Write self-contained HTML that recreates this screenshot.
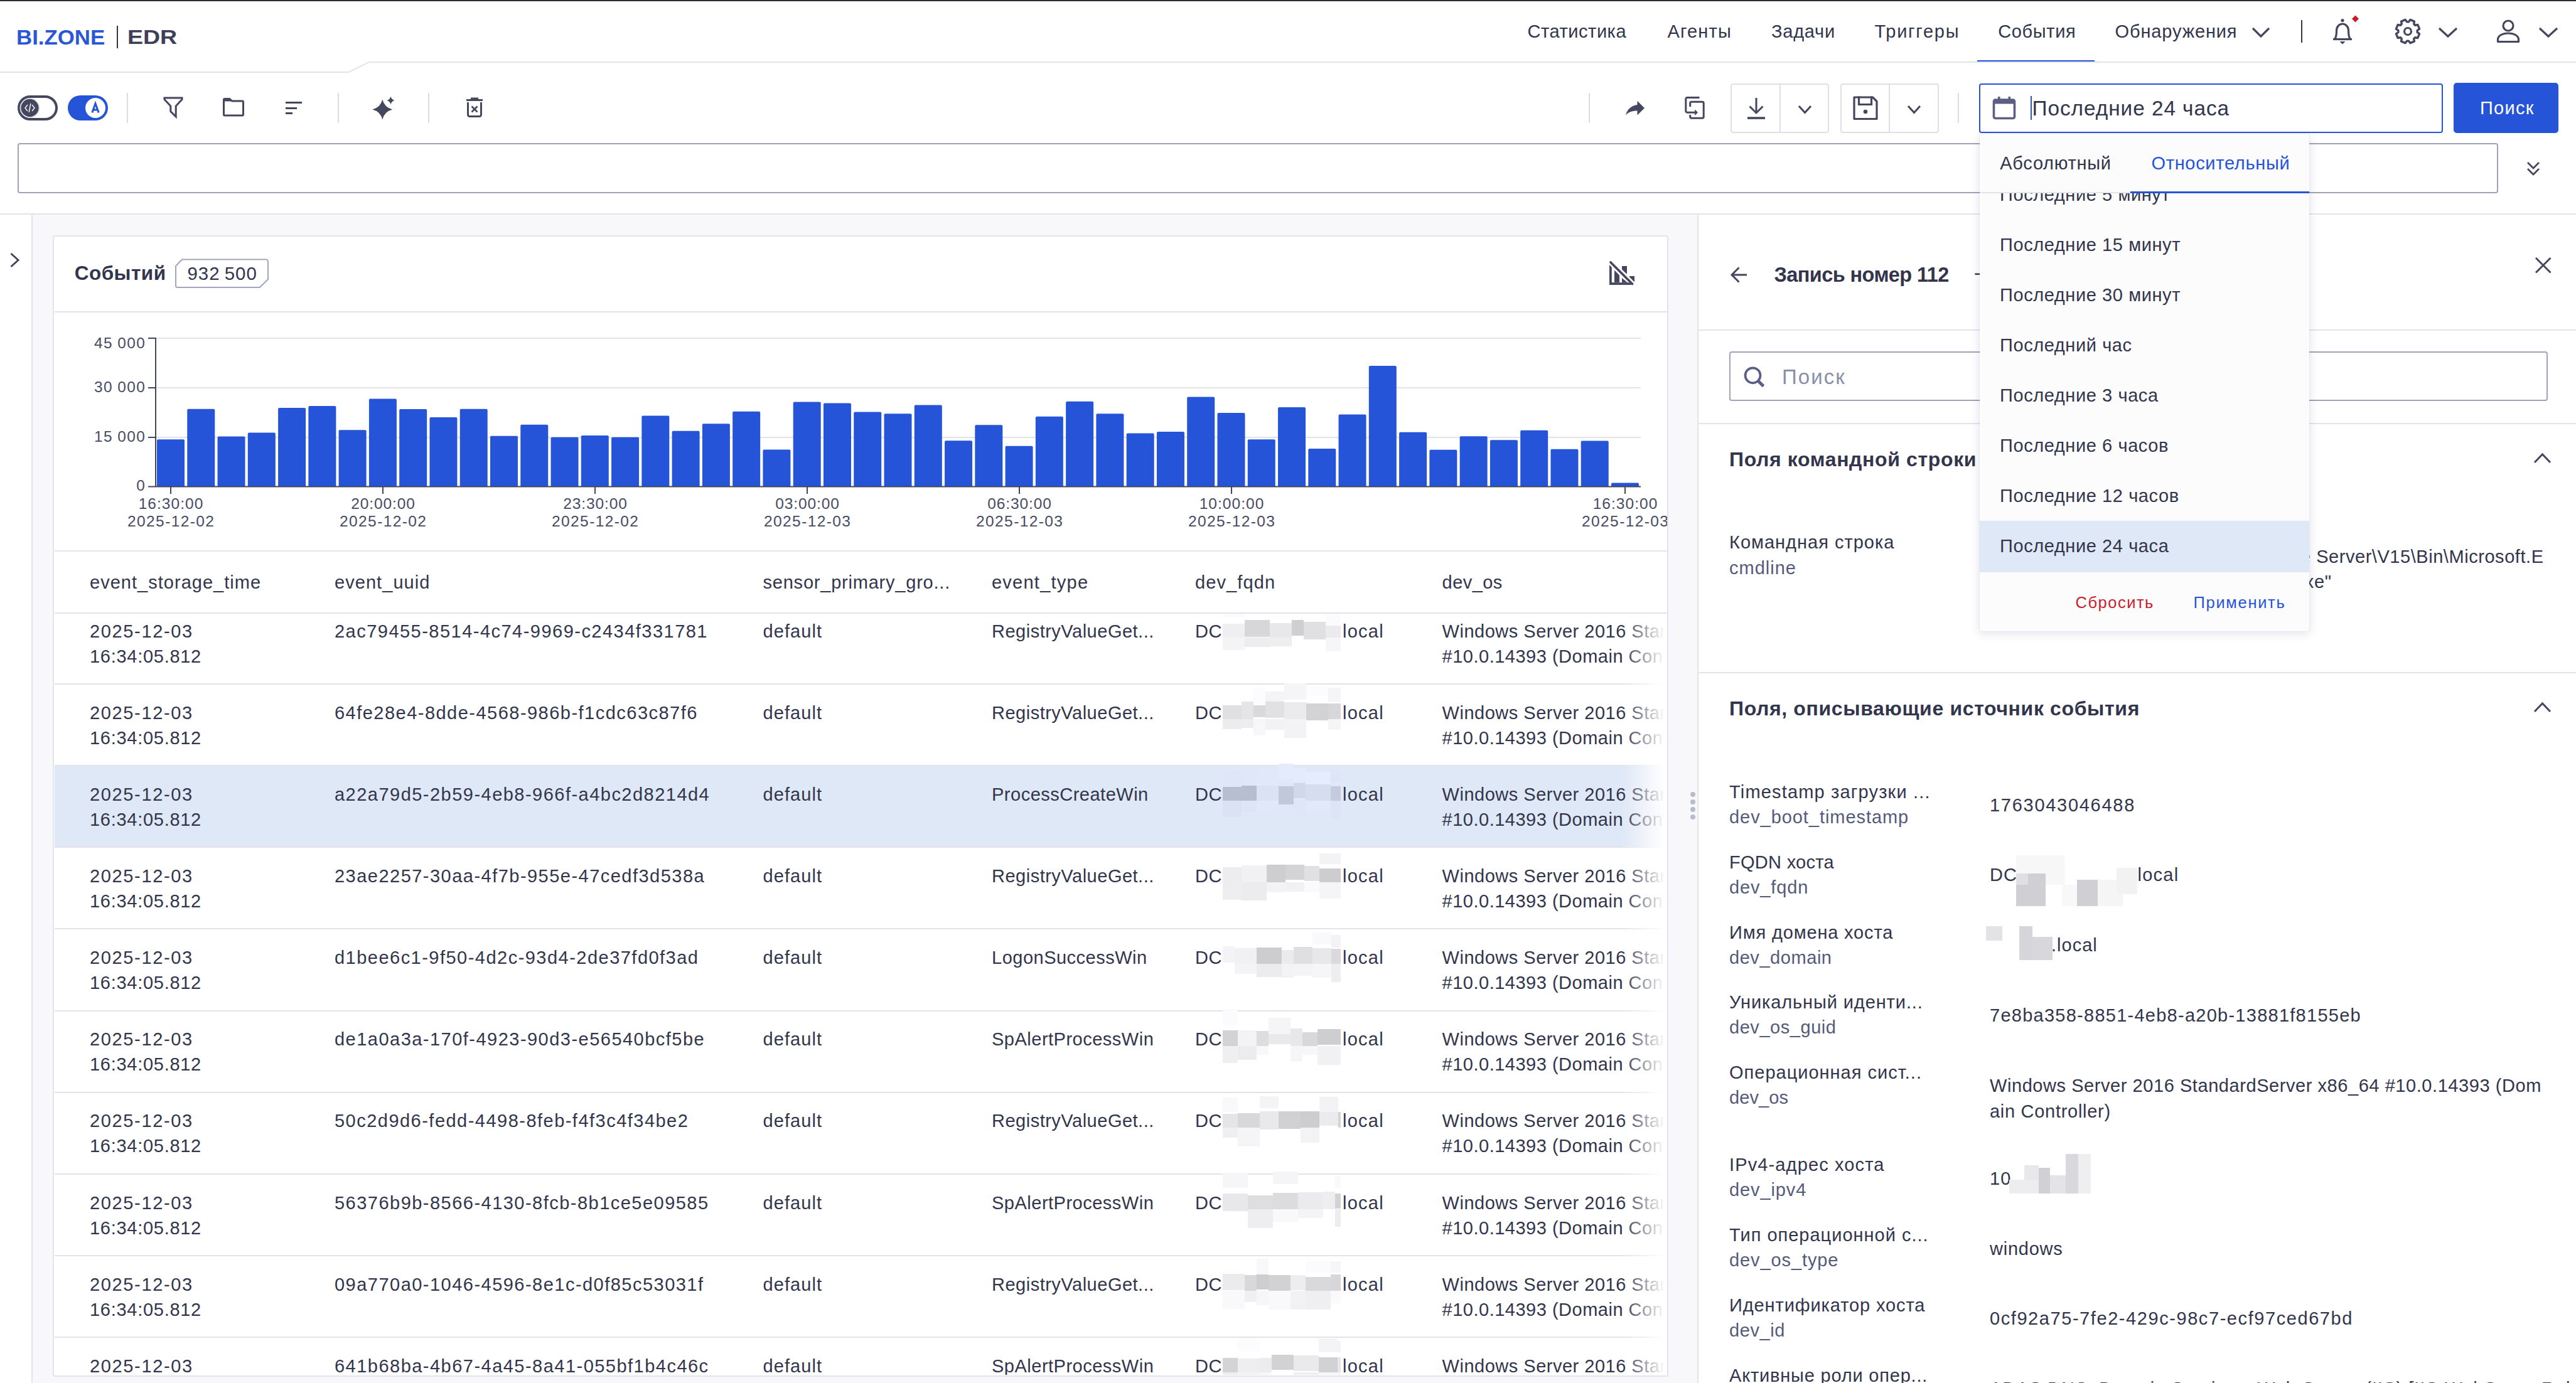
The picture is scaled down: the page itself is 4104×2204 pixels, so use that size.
<!DOCTYPE html>
<html><head><meta charset="utf-8"><title>BI.ZONE EDR</title>
<style>
html,body{margin:0;padding:0;}
body{width:4104px;height:2204px;position:relative;overflow:hidden;background:#fff;font-family:"Liberation Sans",sans-serif;color:#32354b;}
.a{position:absolute;white-space:nowrap;}
svg.a{overflow:visible}
</style></head><body>
<div class="a" style="left:0px;top:0px;width:4104px;height:2px;background:#2c2c38;"></div>
<div class="a" style="left:26.30px;top:37.01px;font-size:34px;line-height:44px;color:#2a56d8;font-weight:700;letter-spacing:0px;transform:scaleX(1.0237);transform-origin:0 0;">BI.ZONE</div>
<div class="a" style="left:186px;top:41px;width:2px;height:36px;background:#32354b;"></div>
<div class="a" style="left:202.50px;top:38.54px;font-size:31.6px;line-height:41px;color:#3d4058;font-weight:700;letter-spacing:0px;transform:scaleX(1.1875);transform-origin:0 0;">EDR</div>
<div class="a" style="left:2433.60px;top:31.45px;font-size:29px;line-height:38px;color:#32354b;letter-spacing:0.522px;">Статистика</div>
<div class="a" style="left:2656.60px;top:31.45px;font-size:29px;line-height:38px;color:#32354b;letter-spacing:1.12px;">Агенты</div>
<div class="a" style="left:2822.00px;top:31.45px;font-size:29px;line-height:38px;color:#32354b;letter-spacing:0.76px;">Задачи</div>
<div class="a" style="left:2986.50px;top:31.45px;font-size:29px;line-height:38px;color:#32354b;letter-spacing:1.714px;">Триггеры</div>
<div class="a" style="left:3183.30px;top:31.45px;font-size:29px;line-height:38px;color:#32354b;letter-spacing:0.617px;">События</div>
<div class="a" style="left:3369.60px;top:31.45px;font-size:29px;line-height:38px;color:#32354b;letter-spacing:0.86px;">Обнаружения</div>
<div class="a" style="left:3150px;top:96px;width:187px;height:3px;background:#2654d8;"></div>
<svg class="a" style="left:0px;top:90px;" width="4104" height="30" viewBox="0 90 4104 30"><polyline points="0,115 555.5,115 587.7,99 4104,99" fill="none" stroke="#e3e4ea" stroke-width="2"/></svg>
<svg class="a" style="left:3585px;top:41px;" width="34" height="21" viewBox="3585 41 34 21"><polyline points="3589,45 3602.0,58 3615,45" fill="none" stroke="#45475f" stroke-width="3.2"/></svg>
<div class="a" style="left:3666px;top:32px;width:2px;height:36px;background:#32354b;"></div>
<svg class="a" style="left:3710px;top:25px;" width="50" height="50" viewBox="3710 25 50 50"><circle cx="3732" cy="32.5" r="2.6" fill="#45475f"/>
<path d="M3720,62 C3722,59 3722.5,56 3722.5,48.5 A9.5,10.5 0 0 1 3741.5,48.5 C3741.5,56 3742,59 3744,62" fill="none" stroke="#45475f" stroke-width="3.2"/>
<path d="M3717,62.5 H3747" stroke="#45475f" stroke-width="3.2"/>
<path d="M3727.5,66 H3736.5 L3732,70.5 Z" fill="#45475f"/></svg>
<svg class="a" style="left:3745px;top:23px;" width="15" height="15" viewBox="3745 23 15 15"><path d="M3752.5,24.5 L3758,30 L3752.5,35.5 L3747,30 Z" fill="#c81e2b"/></svg>
<svg class="a" style="left:3810px;top:24px;" width="52" height="52" viewBox="3810 24 52 52"><path d="M3851.13,51.41 L3854.61,53.82 L3851.86,60.46 L3847.70,59.71 L3845.71,61.70 L3846.46,65.86 L3839.82,68.61 L3837.41,65.13 L3834.59,65.13 L3832.18,68.61 L3825.54,65.86 L3826.29,61.70 L3824.30,59.71 L3820.14,60.46 L3817.39,53.82 L3820.87,51.41 L3820.87,48.59 L3817.39,46.18 L3820.14,39.54 L3824.30,40.29 L3826.29,38.30 L3825.54,34.14 L3832.18,31.39 L3834.59,34.87 L3837.41,34.87 L3839.82,31.39 L3846.46,34.14 L3845.71,38.30 L3847.70,40.29 L3851.86,39.54 L3854.61,46.18 L3851.13,48.59 Z" fill="none" stroke="#45475f" stroke-width="3.4" stroke-linejoin="round"/><circle cx="3836" cy="50" r="5.5" fill="none" stroke="#45475f" stroke-width="3.2"/></svg>
<svg class="a" style="left:3882px;top:41px;" width="36" height="21" viewBox="3882 41 36 21"><polyline points="3886,45 3900.0,58 3914,45" fill="none" stroke="#45475f" stroke-width="3.2"/></svg>
<svg class="a" style="left:3972px;top:26px;" width="48" height="48" viewBox="3972 26 48 48"><circle cx="3996" cy="41" r="8" fill="none" stroke="#45475f" stroke-width="3.2"/><path d="M3979.5,66.5 V63 c0,-6 7,-10 16.5,-10 c9.5,0 16.5,4 16.5,10 V66.5 Z" fill="none" stroke="#45475f" stroke-width="3.2" stroke-linejoin="round"/></svg>
<svg class="a" style="left:4042px;top:41px;" width="36" height="21" viewBox="4042 41 36 21"><polyline points="4046,45 4060.0,58 4074,45" fill="none" stroke="#45475f" stroke-width="3.2"/></svg>
<div class="a" style="left:28px;top:152px;width:64px;height:40px;box-sizing:border-box;border:4px solid #45475f;border-radius:20px;background:#fff"></div>
<svg class="a" style="left:28px;top:152px;" width="64" height="40" viewBox="28 152 64 40"><circle cx="47.5" cy="172" r="15.5" fill="#fff" stroke="#d5d6de" stroke-width="1"/><circle cx="47.5" cy="172" r="14.2" fill="#45475f"/><polyline points="44,167 40,172 44,177" fill="none" stroke="#fff" stroke-width="1.4"/><polyline points="51,167 55,172 51,177" fill="none" stroke="#fff" stroke-width="1.4"/><line x1="48.8" y1="165" x2="46.2" y2="179" stroke="#fff" stroke-width="1.4"/></svg>
<div class="a" style="left:108px;top:152px;width:64px;height:40px;border-radius:20px;background:#2654d8"></div>
<svg class="a" style="left:108px;top:152px;" width="64" height="40" viewBox="108 152 64 40"><circle cx="152" cy="172" r="16" fill="#fff"/><path d="M146.8,179.5 L152,165 L157.2,179.5 M148.6,175 H155.4" fill="none" stroke="#2654d8" stroke-width="3"/></svg>
<div class="a" style="left:202px;top:148px;width:2px;height:48px;background:#dcdde4;"></div>
<div class="a" style="left:538px;top:148px;width:2px;height:48px;background:#dcdde4;"></div>
<div class="a" style="left:682px;top:148px;width:2px;height:48px;background:#dcdde4;"></div>
<div class="a" style="left:2531px;top:148px;width:2px;height:48px;background:#dcdde4;"></div>
<div class="a" style="left:3119px;top:148px;width:2px;height:48px;background:#dcdde4;"></div>
<svg class="a" style="left:255px;top:150px;" width="42" height="44" viewBox="255 150 42 44"><path d="M262,156 H290 V158.5 L280.2,169 V186 L271.8,177.6 V169 L262,158.5 Z" fill="none" stroke="#45475f" stroke-width="3" stroke-linejoin="miter"/></svg>
<svg class="a" style="left:350px;top:150px;" width="44" height="40" viewBox="350 150 44 40"><path d="M356.5,161 V159 a1.5,1.5 0 0 1 1.5,-1.5 H366 L369.5,161 H386 a1.5,1.5 0 0 1 1.5,1.5 V182.5 a1.5,1.5 0 0 1 -1.5,1.5 H358 a1.5,1.5 0 0 1 -1.5,-1.5 Z" fill="none" stroke="#45475f" stroke-width="3" stroke-linejoin="round"/><path d="M356.5,157 H366.5 L370,161.5 H356.5 Z" fill="#45475f"/></svg>
<div class="a" style="left:455px;top:162px;width:26px;height:3px;background:#45475f;"></div>
<div class="a" style="left:455px;top:170.5px;width:18px;height:3px;background:#45475f;"></div>
<div class="a" style="left:455px;top:179px;width:10.5px;height:3px;background:#45475f;"></div>
<svg class="a" style="left:585px;top:150px;" width="50" height="46" viewBox="585 150 50 46"><path d="M609.3,158.5 Q612.5,171.3 625.3,174.5 Q612.5,177.7 609.3,190.5 Q606.0999999999999,177.7 593.3,174.5 Q606.0999999999999,171.3 609.3,158.5 Z" fill="#45475f"/><path d="M622.5,153.7 Q623.76,158.74 628.8,160 Q623.76,161.26 622.5,166.3 Q621.24,161.26 616.2,160 Q621.24,158.74 622.5,153.7 Z" fill="#45475f"/></svg>
<svg class="a" style="left:738px;top:152px;" width="36" height="40" viewBox="738 152 36 40"><path d="M743,159.5 H769" stroke="#45475f" stroke-width="3"/><path d="M751,158 V156.5 H761 V158" fill="#45475f" stroke="#45475f" stroke-width="2"/><path d="M745.5,163 V183 a2.5,2.5 0 0 0 2.5,2.5 H764 a2.5,2.5 0 0 0 2.5,-2.5 V163" fill="none" stroke="#45475f" stroke-width="3"/><path d="M751.5,169.5 L760.5,178.5 M760.5,169.5 L751.5,178.5" stroke="#45475f" stroke-width="2.8"/></svg>
<svg class="a" style="left:2585px;top:155px;" width="40" height="35" viewBox="2585 155 40 35"><path d="M2608.5,160.7 L2620,172.2 L2608.5,183.5 V176.5 C2600,176.5 2594,178.5 2590,184 C2592,175 2598,168.5 2608.5,167 Z" fill="#45475f"/></svg>
<svg class="a" style="left:2680px;top:150px;" width="40" height="44" viewBox="2680 150 40 44"><path d="M2707.5,155.5 H2688 a2.2,2.2 0 0 0 -2.2,2.2 V177 a2.2,2.2 0 0 0 2.2,2.2 H2704" fill="none" stroke="#45475f" stroke-width="3"/><path d="M2692.7,170 V164.5 a2.2,2.2 0 0 1 2.2,-2.2 H2712 a2.2,2.2 0 0 1 2.2,2.2 V186 a2.2,2.2 0 0 1 -2.2,2.2 H2694.9 a2.2,2.2 0 0 1 -2.2,-2.2 V183" fill="none" stroke="#45475f" stroke-width="3"/><path d="M2700,174.5 L2705,179.2 L2700,184 Z" fill="#45475f"/></svg>
<div class="a" style="left:2757px;top:132.5px;width:157px;height:79px;box-sizing:border-box;border:2px solid #dfe0e7;border-radius:4px"></div>
<div class="a" style="left:2835px;top:133px;width:2px;height:78px;background:#dfe0e7;"></div>
<div class="a" style="left:2931.5px;top:132.5px;width:157px;height:79px;box-sizing:border-box;border:2px solid #dfe0e7;border-radius:4px"></div>
<div class="a" style="left:3009px;top:133px;width:2px;height:78px;background:#dfe0e7;"></div>
<svg class="a" style="left:2780px;top:150px;" width="36" height="44" viewBox="2780 150 36 44"><path d="M2798,156 V179.5" stroke="#45475f" stroke-width="3"/><polyline points="2787.5,169.5 2798,180 2808.5,169.5" fill="none" stroke="#45475f" stroke-width="3"/><rect x="2784" y="186.3" width="28" height="3.6" fill="#45475f"/></svg>
<svg class="a" style="left:2861.5px;top:165px;" width="27.0" height="18.5" viewBox="2861.5 165 27.0 18.5"><polyline points="2865.5,169 2875.0,179.5 2884.5,169" fill="none" stroke="#45475f" stroke-width="3"/></svg>
<svg class="a" style="left:2948px;top:148px;" width="48" height="48" viewBox="2948 148 48 48"><path d="M2954,155 H2983.5 L2990,161.5 V189.5 H2954 Z" fill="none" stroke="#45475f" stroke-width="3.2" stroke-linejoin="round"/><path d="M2961.5,153.5 V166.5 H2981.5 V153.5" fill="none" stroke="#45475f" stroke-width="3.2"/><circle cx="2972" cy="178" r="3.3" fill="#45475f"/></svg>
<svg class="a" style="left:3035.5px;top:165px;" width="27.0" height="18.5" viewBox="3035.5 165 27.0 18.5"><polyline points="3039.5,169 3049.0,179.5 3058.5,169" fill="none" stroke="#45475f" stroke-width="3"/></svg>
<div class="a" style="left:3153px;top:132.5px;width:739px;height:79px;box-sizing:border-box;border:2.5px solid #2654d8;border-radius:4px;background:#fff"></div>
<svg class="a" style="left:3170px;top:150px;" width="46" height="44" viewBox="3170 150 46 44"><rect x="3176.5" y="159" width="33" height="29.5" rx="2.5" fill="none" stroke="#5c5f82" stroke-width="3.6"/><rect x="3176.5" y="159" width="33" height="6.5" fill="#5c5f82"/><rect x="3183" y="154" width="3.6" height="6" fill="#5c5f82"/><rect x="3199.5" y="154" width="3.6" height="6" fill="#5c5f82"/></svg>
<div class="a" style="left:3235px;top:153px;width:2px;height:38px;background:#2654d8;"></div>
<div class="a" style="left:3237.50px;top:150.92px;font-size:33.4px;line-height:43px;color:#32354b;letter-spacing:0.938px;">Последние 24 часа</div>
<div class="a" style="left:3909px;top:132px;width:167px;height:80px;border-radius:5px;background:#2654d8"></div>
<div class="a" style="left:3951.00px;top:152.95px;font-size:29px;line-height:38px;color:#ffffff;letter-spacing:1.25px;">Поиск</div>
<div class="a" style="left:28px;top:228px;width:3952px;height:80px;box-sizing:border-box;border:2px solid #9fa2b9;border-radius:4px;background:#fff"></div>
<svg class="a" style="left:4020px;top:252px;" width="32" height="32" viewBox="4020 252 32 32"><polyline points="4027,259 4036,268 4045,259" fill="none" stroke="#45475f" stroke-width="2.8"/><polyline points="4027,269 4036,278 4045,269" fill="none" stroke="#45475f" stroke-width="2.8"/></svg>
<div class="a" style="left:0px;top:340px;width:4104px;height:2px;background:#e3e4ea;"></div>
<div class="a" style="left:52px;top:342px;width:2653px;height:1862px;background:#f8f8fa;"></div>
<div class="a" style="left:50px;top:342px;width:2px;height:1862px;background:#e3e4ea;"></div>
<svg class="a" style="left:12px;top:398px;" width="24" height="32" viewBox="12 398 24 32"><polyline points="17.5,404 29,414.5 17.5,425" fill="none" stroke="#45475f" stroke-width="3"/></svg>
<div class="a" style="left:84px;top:375px;width:2574px;height:1819px;box-sizing:border-box;border:2px solid #e3e4ea;border-radius:4px;background:#fff"></div>
<div class="a" style="left:118.80px;top:415.38px;font-size:31.5px;line-height:41px;color:#32354b;font-weight:700;letter-spacing:0.45px;">Событий</div>
<svg class="a" style="left:276px;top:410px;" width="156" height="52" viewBox="276 410 156 52"><path d="M290,413.5 H424 a3,3 0 0 1 3,3 V445 L414,458 H283 a3,3 0 0 1 -3,-3 V424 Z" fill="none" stroke="#a2a5bd" stroke-width="2"/></svg>
<div class="a" style="left:298.50px;top:417.41px;font-size:29.4px;line-height:38px;color:#32354b;letter-spacing:1.0px;word-spacing:-2px;">932 500</div>
<svg class="a" style="left:2560px;top:412px;" width="48" height="46" viewBox="2560 412 48 46"><polygon points="2564,422 2567.8,426 2567.8,450.2 2596,450.2 2599.5,454 2564,454" fill="#45475f"/>
<polygon points="2572,430.5 2580,438.5 2580,450.2 2572,450.2" fill="#45475f"/>
<polygon points="2584,443 2593,450.2 2584,450.2" fill="#45475f"/>
<polygon points="2584,424 2592,424 2592,437 2584,429.5" fill="#45475f"/>
<polygon points="2596,440 2604,440 2604,449.5 2596,441.5" fill="#45475f"/>
<line x1="2566" y1="418" x2="2600.5" y2="452.5" stroke="#45475f" stroke-width="3.8" stroke-linecap="round"/></svg>
<div class="a" style="left:87px;top:496px;width:2569px;height:2px;background:#e3e4ea;"></div>
<svg class="a" style="left:87px;top:498px;" width="2568" height="380" viewBox="87 498 2568 380"><line x1="248" y1="539" x2="2614" y2="539" stroke="#e2e3e9" stroke-width="2"/><line x1="248" y1="618" x2="2614" y2="618" stroke="#e2e3e9" stroke-width="2"/><line x1="248" y1="697" x2="2614" y2="697" stroke="#e2e3e9" stroke-width="2"/><path d="M250.00,775 V702.30 a2,2 0 0 1 2,-2 H292.00 a2,2 0 0 1 2,2 V775 Z" fill="#2654d8"/><path d="M298.27,775 V653.70 a2,2 0 0 1 2,-2 H340.27 a2,2 0 0 1 2,2 V775 Z" fill="#2654d8"/><path d="M346.54,775 V697.50 a2,2 0 0 1 2,-2 H388.54 a2,2 0 0 1 2,2 V775 Z" fill="#2654d8"/><path d="M394.81,775 V691.60 a2,2 0 0 1 2,-2 H436.81 a2,2 0 0 1 2,2 V775 Z" fill="#2654d8"/><path d="M443.08,775 V652.10 a2,2 0 0 1 2,-2 H485.08 a2,2 0 0 1 2,2 V775 Z" fill="#2654d8"/><path d="M491.35,775 V649.00 a2,2 0 0 1 2,-2 H533.35 a2,2 0 0 1 2,2 V775 Z" fill="#2654d8"/><path d="M539.62,775 V687.20 a2,2 0 0 1 2,-2 H581.62 a2,2 0 0 1 2,2 V775 Z" fill="#2654d8"/><path d="M587.90,775 V637.40 a2,2 0 0 1 2,-2 H629.90 a2,2 0 0 1 2,2 V775 Z" fill="#2654d8"/><path d="M636.17,775 V654.10 a2,2 0 0 1 2,-2 H678.17 a2,2 0 0 1 2,2 V775 Z" fill="#2654d8"/><path d="M684.44,775 V666.90 a2,2 0 0 1 2,-2 H726.44 a2,2 0 0 1 2,2 V775 Z" fill="#2654d8"/><path d="M732.71,775 V653.70 a2,2 0 0 1 2,-2 H774.71 a2,2 0 0 1 2,2 V775 Z" fill="#2654d8"/><path d="M780.98,775 V696.70 a2,2 0 0 1 2,-2 H822.98 a2,2 0 0 1 2,2 V775 Z" fill="#2654d8"/><path d="M829.25,775 V678.80 a2,2 0 0 1 2,-2 H871.25 a2,2 0 0 1 2,2 V775 Z" fill="#2654d8"/><path d="M877.52,775 V698.70 a2,2 0 0 1 2,-2 H919.52 a2,2 0 0 1 2,2 V775 Z" fill="#2654d8"/><path d="M925.79,775 V695.90 a2,2 0 0 1 2,-2 H967.79 a2,2 0 0 1 2,2 V775 Z" fill="#2654d8"/><path d="M974.06,775 V698.70 a2,2 0 0 1 2,-2 H1016.06 a2,2 0 0 1 2,2 V775 Z" fill="#2654d8"/><path d="M1022.33,775 V664.50 a2,2 0 0 1 2,-2 H1064.33 a2,2 0 0 1 2,2 V775 Z" fill="#2654d8"/><path d="M1070.60,775 V688.80 a2,2 0 0 1 2,-2 H1112.60 a2,2 0 0 1 2,2 V775 Z" fill="#2654d8"/><path d="M1118.88,775 V677.20 a2,2 0 0 1 2,-2 H1160.88 a2,2 0 0 1 2,2 V775 Z" fill="#2654d8"/><path d="M1167.15,775 V657.70 a2,2 0 0 1 2,-2 H1209.15 a2,2 0 0 1 2,2 V775 Z" fill="#2654d8"/><path d="M1215.42,775 V718.60 a2,2 0 0 1 2,-2 H1257.42 a2,2 0 0 1 2,2 V775 Z" fill="#2654d8"/><path d="M1263.69,775 V642.60 a2,2 0 0 1 2,-2 H1305.69 a2,2 0 0 1 2,2 V775 Z" fill="#2654d8"/><path d="M1311.96,775 V644.60 a2,2 0 0 1 2,-2 H1353.96 a2,2 0 0 1 2,2 V775 Z" fill="#2654d8"/><path d="M1360.23,775 V658.50 a2,2 0 0 1 2,-2 H1402.23 a2,2 0 0 1 2,2 V775 Z" fill="#2654d8"/><path d="M1408.50,775 V661.30 a2,2 0 0 1 2,-2 H1450.50 a2,2 0 0 1 2,2 V775 Z" fill="#2654d8"/><path d="M1456.77,775 V647.40 a2,2 0 0 1 2,-2 H1498.77 a2,2 0 0 1 2,2 V775 Z" fill="#2654d8"/><path d="M1505.04,775 V704.30 a2,2 0 0 1 2,-2 H1547.04 a2,2 0 0 1 2,2 V775 Z" fill="#2654d8"/><path d="M1553.31,775 V679.20 a2,2 0 0 1 2,-2 H1595.31 a2,2 0 0 1 2,2 V775 Z" fill="#2654d8"/><path d="M1601.58,775 V712.70 a2,2 0 0 1 2,-2 H1643.58 a2,2 0 0 1 2,2 V775 Z" fill="#2654d8"/><path d="M1649.85,775 V665.70 a2,2 0 0 1 2,-2 H1691.85 a2,2 0 0 1 2,2 V775 Z" fill="#2654d8"/><path d="M1698.12,775 V641.80 a2,2 0 0 1 2,-2 H1740.12 a2,2 0 0 1 2,2 V775 Z" fill="#2654d8"/><path d="M1746.40,775 V661.30 a2,2 0 0 1 2,-2 H1788.40 a2,2 0 0 1 2,2 V775 Z" fill="#2654d8"/><path d="M1794.67,775 V692.40 a2,2 0 0 1 2,-2 H1836.67 a2,2 0 0 1 2,2 V775 Z" fill="#2654d8"/><path d="M1842.94,775 V690.00 a2,2 0 0 1 2,-2 H1884.94 a2,2 0 0 1 2,2 V775 Z" fill="#2654d8"/><path d="M1891.21,775 V634.60 a2,2 0 0 1 2,-2 H1933.21 a2,2 0 0 1 2,2 V775 Z" fill="#2654d8"/><path d="M1939.48,775 V660.10 a2,2 0 0 1 2,-2 H1981.48 a2,2 0 0 1 2,2 V775 Z" fill="#2654d8"/><path d="M1987.75,775 V702.30 a2,2 0 0 1 2,-2 H2029.75 a2,2 0 0 1 2,2 V775 Z" fill="#2654d8"/><path d="M2036.02,775 V651.10 a2,2 0 0 1 2,-2 H2078.02 a2,2 0 0 1 2,2 V775 Z" fill="#2654d8"/><path d="M2084.29,775 V716.90 a2,2 0 0 1 2,-2 H2126.29 a2,2 0 0 1 2,2 V775 Z" fill="#2654d8"/><path d="M2132.56,775 V662.60 a2,2 0 0 1 2,-2 H2174.56 a2,2 0 0 1 2,2 V775 Z" fill="#2654d8"/><path d="M2180.83,775 V584.90 a2,2 0 0 1 2,-2 H2222.83 a2,2 0 0 1 2,2 V775 Z" fill="#2654d8"/><path d="M2229.10,775 V690.80 a2,2 0 0 1 2,-2 H2271.10 a2,2 0 0 1 2,2 V775 Z" fill="#2654d8"/><path d="M2277.38,775 V718.80 a2,2 0 0 1 2,-2 H2319.38 a2,2 0 0 1 2,2 V775 Z" fill="#2654d8"/><path d="M2325.65,775 V697.30 a2,2 0 0 1 2,-2 H2367.65 a2,2 0 0 1 2,2 V775 Z" fill="#2654d8"/><path d="M2373.92,775 V703.20 a2,2 0 0 1 2,-2 H2415.92 a2,2 0 0 1 2,2 V775 Z" fill="#2654d8"/><path d="M2422.19,775 V687.70 a2,2 0 0 1 2,-2 H2464.19 a2,2 0 0 1 2,2 V775 Z" fill="#2654d8"/><path d="M2470.46,775 V717.80 a2,2 0 0 1 2,-2 H2512.46 a2,2 0 0 1 2,2 V775 Z" fill="#2654d8"/><path d="M2518.73,775 V704.50 a2,2 0 0 1 2,-2 H2560.73 a2,2 0 0 1 2,2 V775 Z" fill="#2654d8"/><path d="M2567.00,775 V771.60 a2,2 0 0 1 2,-2 H2609.00 a2,2 0 0 1 2,2 V775 Z" fill="#2654d8"/><line x1="236" y1="775.5" x2="2614" y2="775.5" stroke="#43465e" stroke-width="2"/><line x1="248" y1="538" x2="248" y2="776" stroke="#43465e" stroke-width="2"/><line x1="236" y1="539" x2="248" y2="539" stroke="#43465e" stroke-width="2"/><line x1="236" y1="618" x2="248" y2="618" stroke="#43465e" stroke-width="2"/><line x1="236" y1="697" x2="248" y2="697" stroke="#43465e" stroke-width="2"/><line x1="272" y1="775" x2="272" y2="787" stroke="#43465e" stroke-width="2"/><line x1="610" y1="775" x2="610" y2="787" stroke="#43465e" stroke-width="2"/><line x1="948" y1="775" x2="948" y2="787" stroke="#43465e" stroke-width="2"/><line x1="1286" y1="775" x2="1286" y2="787" stroke="#43465e" stroke-width="2"/><line x1="1624" y1="775" x2="1624" y2="787" stroke="#43465e" stroke-width="2"/><line x1="1962" y1="775" x2="1962" y2="787" stroke="#43465e" stroke-width="2"/><line x1="2589" y1="775" x2="2589" y2="787" stroke="#43465e" stroke-width="2"/></svg>
<div class="a" style="right:3871.90px;top:531.34px;font-size:24.4px;line-height:32px;color:#484b63;letter-spacing:1.4px;word-spacing:-1px;">45 000</div>
<div class="a" style="right:3871.90px;top:601.04px;font-size:24.4px;line-height:32px;color:#484b63;letter-spacing:1.4px;word-spacing:-1px;">30 000</div>
<div class="a" style="right:3871.90px;top:679.74px;font-size:24.4px;line-height:32px;color:#484b63;letter-spacing:1.4px;word-spacing:-1px;">15 000</div>
<div class="a" style="right:3871.90px;top:758.04px;font-size:24.4px;line-height:32px;color:#484b63;letter-spacing:1.4px;word-spacing:-1px;">0</div>
<div class="a" style="left:87px;top:780px;width:2569px;height:90px;overflow:hidden">
<div class="a" style="left:85px;top:9.0px;width:200px;text-align:center;font-size:24.5px;line-height:28px;color:#484b63"><span style="letter-spacing:1.029px;margin-right:-1.029px">16:30:00</span><br><span style="letter-spacing:1.4px;margin-right:-1.4px">2025-12-02</span></div>
<div class="a" style="left:423px;top:9.0px;width:200px;text-align:center;font-size:24.5px;line-height:28px;color:#484b63"><span style="letter-spacing:0.886px;margin-right:-0.886px">20:00:00</span><br><span style="letter-spacing:1.4px;margin-right:-1.4px">2025-12-02</span></div>
<div class="a" style="left:761px;top:9.0px;width:200px;text-align:center;font-size:24.5px;line-height:28px;color:#484b63"><span style="letter-spacing:0.886px;margin-right:-0.886px">23:30:00</span><br><span style="letter-spacing:1.4px;margin-right:-1.4px">2025-12-02</span></div>
<div class="a" style="left:1099px;top:9.0px;width:200px;text-align:center;font-size:24.5px;line-height:28px;color:#484b63"><span style="letter-spacing:0.886px;margin-right:-0.886px">03:00:00</span><br><span style="letter-spacing:1.4px;margin-right:-1.4px">2025-12-03</span></div>
<div class="a" style="left:1437px;top:9.0px;width:200px;text-align:center;font-size:24.5px;line-height:28px;color:#484b63"><span style="letter-spacing:0.886px;margin-right:-0.886px">06:30:00</span><br><span style="letter-spacing:1.4px;margin-right:-1.4px">2025-12-03</span></div>
<div class="a" style="left:1775px;top:9.0px;width:200px;text-align:center;font-size:24.5px;line-height:28px;color:#484b63"><span style="letter-spacing:1.029px;margin-right:-1.029px">10:00:00</span><br><span style="letter-spacing:1.4px;margin-right:-1.4px">2025-12-03</span></div>
<div class="a" style="left:2402px;top:9.0px;width:200px;text-align:center;font-size:24.5px;line-height:28px;color:#484b63"><span style="letter-spacing:1.029px;margin-right:-1.029px">16:30:00</span><br><span style="letter-spacing:1.4px;margin-right:-1.4px">2025-12-03</span></div>
</div>
<div class="a" style="left:87px;top:877px;width:2569px;height:2px;background:#e3e4ea;"></div>
<div class="a" style="left:143.00px;top:908.95px;font-size:29px;line-height:38px;color:#32354b;letter-spacing:1.024px;">event_storage_time</div>
<div class="a" style="left:533.00px;top:908.95px;font-size:29px;line-height:38px;color:#32354b;letter-spacing:1.056px;">event_uuid</div>
<div class="a" style="left:1215.50px;top:908.95px;font-size:29px;line-height:38px;color:#32354b;letter-spacing:0.785px;">sensor_primary_gro...</div>
<div class="a" style="left:1580.00px;top:908.95px;font-size:29px;line-height:38px;color:#32354b;letter-spacing:1.244px;">event_type</div>
<div class="a" style="left:1904.00px;top:908.95px;font-size:29px;line-height:38px;color:#32354b;letter-spacing:1.1px;">dev_fqdn</div>
<div class="a" style="left:2297.60px;top:908.95px;font-size:29px;line-height:38px;color:#32354b;letter-spacing:0.44px;">dev_os</div>
<div class="a" style="left:87px;top:976px;width:2569px;height:2px;background:#e3e4ea;"></div>
<div class="a" style="left:87px;top:978px;width:2569px;height:1213px;overflow:hidden">
<div class="a" style="left:56.00px;top:8.85px;font-size:29px;line-height:38px;color:#32354b;letter-spacing:1.644px;">2025-12-03</div>
<div class="a" style="left:56.00px;top:48.85px;font-size:29px;line-height:38px;color:#32354b;letter-spacing:0.718px;">16:34:05.812</div>
<div class="a" style="left:446.00px;top:8.85px;font-size:29px;line-height:38px;color:#32354b;letter-spacing:1.477px;">2ac79455-8514-4c74-9969-c2434f331781</div>
<div class="a" style="left:1128.50px;top:8.85px;font-size:29px;line-height:38px;color:#32354b;letter-spacing:1.067px;">default</div>
<div class="a" style="left:1493.00px;top:8.85px;font-size:29px;line-height:38px;color:#32354b;letter-spacing:0.5px;">RegistryValueGet...</div>
<div class="a" style="left:1817.00px;top:8.85px;font-size:29px;line-height:38px;color:#32354b;letter-spacing:0.6px;">DC-</div>
<div class="a" style="left:2052.00px;top:8.85px;font-size:29px;line-height:38px;color:#32354b;letter-spacing:1.25px;">local</div>
<div class="a" style="left:2210.60px;top:8.85px;font-size:29px;line-height:38px;color:#32354b;letter-spacing:0.5px;">Windows Server 2016 StandardServer x86_64</div>
<div class="a" style="left:2210.60px;top:48.85px;font-size:29px;line-height:38px;color:#32354b;letter-spacing:0.5px;">#10.0.14393 (Domain Controller)</div>
<div class="a" style="left:0;top:111.1px;width:2569px;height:2px;background:#e3e4ea"></div>
<div class="a" style="left:56.00px;top:138.95px;font-size:29px;line-height:38px;color:#32354b;letter-spacing:1.644px;">2025-12-03</div>
<div class="a" style="left:56.00px;top:178.95px;font-size:29px;line-height:38px;color:#32354b;letter-spacing:0.718px;">16:34:05.812</div>
<div class="a" style="left:446.00px;top:138.95px;font-size:29px;line-height:38px;color:#32354b;letter-spacing:1.477px;">64fe28e4-8dde-4568-986b-f1cdc63c87f6</div>
<div class="a" style="left:1128.50px;top:138.95px;font-size:29px;line-height:38px;color:#32354b;letter-spacing:1.067px;">default</div>
<div class="a" style="left:1493.00px;top:138.95px;font-size:29px;line-height:38px;color:#32354b;letter-spacing:0.5px;">RegistryValueGet...</div>
<div class="a" style="left:1817.00px;top:138.95px;font-size:29px;line-height:38px;color:#32354b;letter-spacing:0.6px;">DC-</div>
<div class="a" style="left:2052.00px;top:138.95px;font-size:29px;line-height:38px;color:#32354b;letter-spacing:1.25px;">local</div>
<div class="a" style="left:2210.60px;top:138.95px;font-size:29px;line-height:38px;color:#32354b;letter-spacing:0.5px;">Windows Server 2016 StandardServer x86_64</div>
<div class="a" style="left:2210.60px;top:178.95px;font-size:29px;line-height:38px;color:#32354b;letter-spacing:0.5px;">#10.0.14393 (Domain Controller)</div>
<div class="a" style="left:0;top:242.1px;width:2569px;height:130.5px;background:#dfe8f6"></div>
<div class="a" style="left:0;top:241.2px;width:2569px;height:2px;background:#e3e4ea"></div>
<div class="a" style="left:56.00px;top:269.05px;font-size:29px;line-height:38px;color:#32354b;letter-spacing:1.644px;">2025-12-03</div>
<div class="a" style="left:56.00px;top:309.05px;font-size:29px;line-height:38px;color:#32354b;letter-spacing:0.718px;">16:34:05.812</div>
<div class="a" style="left:446.00px;top:269.05px;font-size:29px;line-height:38px;color:#32354b;letter-spacing:1.477px;">a22a79d5-2b59-4eb8-966f-a4bc2d8214d4</div>
<div class="a" style="left:1128.50px;top:269.05px;font-size:29px;line-height:38px;color:#32354b;letter-spacing:1.067px;">default</div>
<div class="a" style="left:1493.00px;top:269.05px;font-size:29px;line-height:38px;color:#32354b;letter-spacing:0.5px;">ProcessCreateWin</div>
<div class="a" style="left:1817.00px;top:269.05px;font-size:29px;line-height:38px;color:#32354b;letter-spacing:0.6px;">DC-</div>
<div class="a" style="left:2052.00px;top:269.05px;font-size:29px;line-height:38px;color:#32354b;letter-spacing:1.25px;">local</div>
<div class="a" style="left:2210.60px;top:269.05px;font-size:29px;line-height:38px;color:#32354b;letter-spacing:0.5px;">Windows Server 2016 StandardServer x86_64</div>
<div class="a" style="left:2210.60px;top:309.05px;font-size:29px;line-height:38px;color:#32354b;letter-spacing:0.5px;">#10.0.14393 (Domain Controller)</div>
<div class="a" style="left:0;top:371.3px;width:2569px;height:2px;background:#e3e4ea"></div>
<div class="a" style="left:56.00px;top:399.15px;font-size:29px;line-height:38px;color:#32354b;letter-spacing:1.644px;">2025-12-03</div>
<div class="a" style="left:56.00px;top:439.15px;font-size:29px;line-height:38px;color:#32354b;letter-spacing:0.718px;">16:34:05.812</div>
<div class="a" style="left:446.00px;top:399.15px;font-size:29px;line-height:38px;color:#32354b;letter-spacing:1.477px;">23ae2257-30aa-4f7b-955e-47cedf3d538a</div>
<div class="a" style="left:1128.50px;top:399.15px;font-size:29px;line-height:38px;color:#32354b;letter-spacing:1.067px;">default</div>
<div class="a" style="left:1493.00px;top:399.15px;font-size:29px;line-height:38px;color:#32354b;letter-spacing:0.5px;">RegistryValueGet...</div>
<div class="a" style="left:1817.00px;top:399.15px;font-size:29px;line-height:38px;color:#32354b;letter-spacing:0.6px;">DC-</div>
<div class="a" style="left:2052.00px;top:399.15px;font-size:29px;line-height:38px;color:#32354b;letter-spacing:1.25px;">local</div>
<div class="a" style="left:2210.60px;top:399.15px;font-size:29px;line-height:38px;color:#32354b;letter-spacing:0.5px;">Windows Server 2016 StandardServer x86_64</div>
<div class="a" style="left:2210.60px;top:439.15px;font-size:29px;line-height:38px;color:#32354b;letter-spacing:0.5px;">#10.0.14393 (Domain Controller)</div>
<div class="a" style="left:0;top:501.4px;width:2569px;height:2px;background:#e3e4ea"></div>
<div class="a" style="left:56.00px;top:529.25px;font-size:29px;line-height:38px;color:#32354b;letter-spacing:1.644px;">2025-12-03</div>
<div class="a" style="left:56.00px;top:569.25px;font-size:29px;line-height:38px;color:#32354b;letter-spacing:0.718px;">16:34:05.812</div>
<div class="a" style="left:446.00px;top:529.25px;font-size:29px;line-height:38px;color:#32354b;letter-spacing:1.477px;">d1bee6c1-9f50-4d2c-93d4-2de37fd0f3ad</div>
<div class="a" style="left:1128.50px;top:529.25px;font-size:29px;line-height:38px;color:#32354b;letter-spacing:1.067px;">default</div>
<div class="a" style="left:1493.00px;top:529.25px;font-size:29px;line-height:38px;color:#32354b;letter-spacing:0.5px;">LogonSuccessWin</div>
<div class="a" style="left:1817.00px;top:529.25px;font-size:29px;line-height:38px;color:#32354b;letter-spacing:0.6px;">DC-</div>
<div class="a" style="left:2052.00px;top:529.25px;font-size:29px;line-height:38px;color:#32354b;letter-spacing:1.25px;">local</div>
<div class="a" style="left:2210.60px;top:529.25px;font-size:29px;line-height:38px;color:#32354b;letter-spacing:0.5px;">Windows Server 2016 StandardServer x86_64</div>
<div class="a" style="left:2210.60px;top:569.25px;font-size:29px;line-height:38px;color:#32354b;letter-spacing:0.5px;">#10.0.14393 (Domain Controller)</div>
<div class="a" style="left:0;top:631.5px;width:2569px;height:2px;background:#e3e4ea"></div>
<div class="a" style="left:56.00px;top:659.35px;font-size:29px;line-height:38px;color:#32354b;letter-spacing:1.644px;">2025-12-03</div>
<div class="a" style="left:56.00px;top:699.35px;font-size:29px;line-height:38px;color:#32354b;letter-spacing:0.718px;">16:34:05.812</div>
<div class="a" style="left:446.00px;top:659.35px;font-size:29px;line-height:38px;color:#32354b;letter-spacing:1.477px;">de1a0a3a-170f-4923-90d3-e56540bcf5be</div>
<div class="a" style="left:1128.50px;top:659.35px;font-size:29px;line-height:38px;color:#32354b;letter-spacing:1.067px;">default</div>
<div class="a" style="left:1493.00px;top:659.35px;font-size:29px;line-height:38px;color:#32354b;letter-spacing:0.5px;">SpAlertProcessWin</div>
<div class="a" style="left:1817.00px;top:659.35px;font-size:29px;line-height:38px;color:#32354b;letter-spacing:0.6px;">DC-</div>
<div class="a" style="left:2052.00px;top:659.35px;font-size:29px;line-height:38px;color:#32354b;letter-spacing:1.25px;">local</div>
<div class="a" style="left:2210.60px;top:659.35px;font-size:29px;line-height:38px;color:#32354b;letter-spacing:0.5px;">Windows Server 2016 StandardServer x86_64</div>
<div class="a" style="left:2210.60px;top:699.35px;font-size:29px;line-height:38px;color:#32354b;letter-spacing:0.5px;">#10.0.14393 (Domain Controller)</div>
<div class="a" style="left:0;top:761.6px;width:2569px;height:2px;background:#e3e4ea"></div>
<div class="a" style="left:56.00px;top:789.45px;font-size:29px;line-height:38px;color:#32354b;letter-spacing:1.644px;">2025-12-03</div>
<div class="a" style="left:56.00px;top:829.45px;font-size:29px;line-height:38px;color:#32354b;letter-spacing:0.718px;">16:34:05.812</div>
<div class="a" style="left:446.00px;top:789.45px;font-size:29px;line-height:38px;color:#32354b;letter-spacing:1.477px;">50c2d9d6-fedd-4498-8feb-f4f3c4f34be2</div>
<div class="a" style="left:1128.50px;top:789.45px;font-size:29px;line-height:38px;color:#32354b;letter-spacing:1.067px;">default</div>
<div class="a" style="left:1493.00px;top:789.45px;font-size:29px;line-height:38px;color:#32354b;letter-spacing:0.5px;">RegistryValueGet...</div>
<div class="a" style="left:1817.00px;top:789.45px;font-size:29px;line-height:38px;color:#32354b;letter-spacing:0.6px;">DC-</div>
<div class="a" style="left:2052.00px;top:789.45px;font-size:29px;line-height:38px;color:#32354b;letter-spacing:1.25px;">local</div>
<div class="a" style="left:2210.60px;top:789.45px;font-size:29px;line-height:38px;color:#32354b;letter-spacing:0.5px;">Windows Server 2016 StandardServer x86_64</div>
<div class="a" style="left:2210.60px;top:829.45px;font-size:29px;line-height:38px;color:#32354b;letter-spacing:0.5px;">#10.0.14393 (Domain Controller)</div>
<div class="a" style="left:0;top:891.7px;width:2569px;height:2px;background:#e3e4ea"></div>
<div class="a" style="left:56.00px;top:919.55px;font-size:29px;line-height:38px;color:#32354b;letter-spacing:1.644px;">2025-12-03</div>
<div class="a" style="left:56.00px;top:959.55px;font-size:29px;line-height:38px;color:#32354b;letter-spacing:0.718px;">16:34:05.812</div>
<div class="a" style="left:446.00px;top:919.55px;font-size:29px;line-height:38px;color:#32354b;letter-spacing:1.477px;">56376b9b-8566-4130-8fcb-8b1ce5e09585</div>
<div class="a" style="left:1128.50px;top:919.55px;font-size:29px;line-height:38px;color:#32354b;letter-spacing:1.067px;">default</div>
<div class="a" style="left:1493.00px;top:919.55px;font-size:29px;line-height:38px;color:#32354b;letter-spacing:0.5px;">SpAlertProcessWin</div>
<div class="a" style="left:1817.00px;top:919.55px;font-size:29px;line-height:38px;color:#32354b;letter-spacing:0.6px;">DC-</div>
<div class="a" style="left:2052.00px;top:919.55px;font-size:29px;line-height:38px;color:#32354b;letter-spacing:1.25px;">local</div>
<div class="a" style="left:2210.60px;top:919.55px;font-size:29px;line-height:38px;color:#32354b;letter-spacing:0.5px;">Windows Server 2016 StandardServer x86_64</div>
<div class="a" style="left:2210.60px;top:959.55px;font-size:29px;line-height:38px;color:#32354b;letter-spacing:0.5px;">#10.0.14393 (Domain Controller)</div>
<div class="a" style="left:0;top:1021.8px;width:2569px;height:2px;background:#e3e4ea"></div>
<div class="a" style="left:56.00px;top:1049.65px;font-size:29px;line-height:38px;color:#32354b;letter-spacing:1.644px;">2025-12-03</div>
<div class="a" style="left:56.00px;top:1089.65px;font-size:29px;line-height:38px;color:#32354b;letter-spacing:0.718px;">16:34:05.812</div>
<div class="a" style="left:446.00px;top:1049.65px;font-size:29px;line-height:38px;color:#32354b;letter-spacing:1.477px;">09a770a0-1046-4596-8e1c-d0f85c53031f</div>
<div class="a" style="left:1128.50px;top:1049.65px;font-size:29px;line-height:38px;color:#32354b;letter-spacing:1.067px;">default</div>
<div class="a" style="left:1493.00px;top:1049.65px;font-size:29px;line-height:38px;color:#32354b;letter-spacing:0.5px;">RegistryValueGet...</div>
<div class="a" style="left:1817.00px;top:1049.65px;font-size:29px;line-height:38px;color:#32354b;letter-spacing:0.6px;">DC-</div>
<div class="a" style="left:2052.00px;top:1049.65px;font-size:29px;line-height:38px;color:#32354b;letter-spacing:1.25px;">local</div>
<div class="a" style="left:2210.60px;top:1049.65px;font-size:29px;line-height:38px;color:#32354b;letter-spacing:0.5px;">Windows Server 2016 StandardServer x86_64</div>
<div class="a" style="left:2210.60px;top:1089.65px;font-size:29px;line-height:38px;color:#32354b;letter-spacing:0.5px;">#10.0.14393 (Domain Controller)</div>
<div class="a" style="left:0;top:1151.9px;width:2569px;height:2px;background:#e3e4ea"></div>
<div class="a" style="left:56.00px;top:1179.75px;font-size:29px;line-height:38px;color:#32354b;letter-spacing:1.644px;">2025-12-03</div>
<div class="a" style="left:56.00px;top:1219.75px;font-size:29px;line-height:38px;color:#32354b;letter-spacing:0.718px;">16:34:05.812</div>
<div class="a" style="left:446.00px;top:1179.75px;font-size:29px;line-height:38px;color:#32354b;letter-spacing:1.477px;">641b68ba-4b67-4a45-8a41-055bf1b4c46c</div>
<div class="a" style="left:1128.50px;top:1179.75px;font-size:29px;line-height:38px;color:#32354b;letter-spacing:1.067px;">default</div>
<div class="a" style="left:1493.00px;top:1179.75px;font-size:29px;line-height:38px;color:#32354b;letter-spacing:0.5px;">SpAlertProcessWin</div>
<div class="a" style="left:1817.00px;top:1179.75px;font-size:29px;line-height:38px;color:#32354b;letter-spacing:0.6px;">DC-</div>
<div class="a" style="left:2052.00px;top:1179.75px;font-size:29px;line-height:38px;color:#32354b;letter-spacing:1.25px;">local</div>
<div class="a" style="left:2210.60px;top:1179.75px;font-size:29px;line-height:38px;color:#32354b;letter-spacing:0.5px;">Windows Server 2016 StandardServer x86_64</div>
<div class="a" style="left:2210.60px;top:1219.75px;font-size:29px;line-height:38px;color:#32354b;letter-spacing:0.5px;">#10.0.14393 (Domain Controller)</div>
<div class="a" style="left:1860.5px;top:16.0px;width:35.0px;height:30px;background:rgb(239,239,242)"></div>
<div class="a" style="left:1860.5px;top:38.0px;width:35.0px;height:20px;background:rgb(244,244,247)"></div>
<div class="a" style="left:1860.5px;top:-21.0px;width:35.0px;height:26px;background:rgb(251,251,254)"></div>
<div class="a" style="left:1895.5px;top:10.0px;width:40.0px;height:27px;background:rgb(215,215,218)"></div>
<div class="a" style="left:1895.5px;top:38.0px;width:40.0px;height:15px;background:rgb(237,237,240)"></div>
<div class="a" style="left:1935.5px;top:15.0px;width:35.0px;height:29px;background:rgb(232,232,235)"></div>
<div class="a" style="left:1935.5px;top:38.0px;width:35.0px;height:14px;background:rgb(238,238,241)"></div>
<div class="a" style="left:1970.5px;top:10.0px;width:19.0px;height:25px;background:rgb(207,207,210)"></div>
<div class="a" style="left:1989.5px;top:13.0px;width:35.0px;height:28px;background:rgb(224,224,227)"></div>
<div class="a" style="left:2024.5px;top:10.0px;width:24.5px;height:29px;background:rgb(235,235,238)"></div>
<div class="a" style="left:2024.5px;top:38.0px;width:24.5px;height:22px;background:rgb(246,246,249)"></div>
<div class="a" style="left:2024.5px;top:-8.0px;width:24.5px;height:27px;background:rgb(251,251,254)"></div>
<div class="a" style="left:1860.5px;top:146.1px;width:30.0px;height:25px;background:rgb(224,224,227)"></div>
<div class="a" style="left:1860.5px;top:168.1px;width:30.0px;height:16px;background:rgb(236,236,239)"></div>
<div class="a" style="left:1890.5px;top:140.1px;width:19.0px;height:30px;background:rgb(229,229,232)"></div>
<div class="a" style="left:1890.5px;top:168.1px;width:19.0px;height:14px;background:rgb(237,237,240)"></div>
<div class="a" style="left:1909.5px;top:141.1px;width:19.0px;height:24px;background:rgb(217,217,220)"></div>
<div class="a" style="left:1909.5px;top:168.1px;width:19.0px;height:26px;background:rgb(247,247,250)"></div>
<div class="a" style="left:1909.5px;top:118.1px;width:19.0px;height:28px;background:rgb(252,252,255)"></div>
<div class="a" style="left:1928.5px;top:140.1px;width:30.0px;height:26px;background:rgb(225,225,228)"></div>
<div class="a" style="left:1928.5px;top:168.1px;width:30.0px;height:17px;background:rgb(242,242,245)"></div>
<div class="a" style="left:1928.5px;top:124.1px;width:30.0px;height:16px;background:rgb(244,244,247)"></div>
<div class="a" style="left:1958.5px;top:141.1px;width:35.0px;height:29px;background:rgb(235,235,238)"></div>
<div class="a" style="left:1958.5px;top:168.1px;width:35.0px;height:30px;background:rgb(243,243,246)"></div>
<div class="a" style="left:1958.5px;top:111.1px;width:35.0px;height:26px;background:rgb(245,245,248)"></div>
<div class="a" style="left:1993.5px;top:143.1px;width:35.0px;height:27px;background:rgb(211,211,214)"></div>
<div class="a" style="left:1993.5px;top:115.1px;width:35.0px;height:16px;background:rgb(252,252,255)"></div>
<div class="a" style="left:2028.5px;top:143.1px;width:20.5px;height:30px;background:rgb(215,215,218)"></div>
<div class="a" style="left:2028.5px;top:168.1px;width:20.5px;height:17px;background:rgb(245,245,248)"></div>
<div class="a" style="left:2028.5px;top:118.1px;width:20.5px;height:23px;background:rgb(245,245,248)"></div>
<div class="a" style="left:1860.5px;top:276.2px;width:30.0px;height:28px;background:rgb(182,190,208)"></div>
<div class="a" style="left:1860.5px;top:298.2px;width:30.0px;height:26px;background:rgb(218,226,244)"></div>
<div class="a" style="left:1860.5px;top:248.2px;width:30.0px;height:25px;background:rgb(222,230,248)"></div>
<div class="a" style="left:1890.5px;top:274.2px;width:24.0px;height:26px;background:rgb(182,190,208)"></div>
<div class="a" style="left:1890.5px;top:298.2px;width:24.0px;height:18px;background:rgb(221,229,247)"></div>
<div class="a" style="left:1914.5px;top:271.2px;width:35.0px;height:30px;background:rgb(218,226,244)"></div>
<div class="a" style="left:1914.5px;top:298.2px;width:35.0px;height:18px;background:rgb(224,232,250)"></div>
<div class="a" style="left:1914.5px;top:247.2px;width:35.0px;height:27px;background:rgb(224,232,250)"></div>
<div class="a" style="left:1949.5px;top:275.2px;width:24.0px;height:29px;background:rgb(192,200,218)"></div>
<div class="a" style="left:1949.5px;top:239.2px;width:24.0px;height:25px;background:rgb(227,235,253)"></div>
<div class="a" style="left:1973.5px;top:270.2px;width:19.0px;height:24px;background:rgb(208,216,234)"></div>
<div class="a" style="left:1973.5px;top:298.2px;width:19.0px;height:22px;background:rgb(222,230,248)"></div>
<div class="a" style="left:1973.5px;top:246.2px;width:19.0px;height:22px;background:rgb(227,235,253)"></div>
<div class="a" style="left:1992.5px;top:272.2px;width:40.0px;height:28px;background:rgb(213,221,239)"></div>
<div class="a" style="left:1992.5px;top:298.2px;width:40.0px;height:16px;background:rgb(225,233,251)"></div>
<div class="a" style="left:1992.5px;top:252.2px;width:40.0px;height:20px;background:rgb(228,236,254)"></div>
<div class="a" style="left:2032.5px;top:275.2px;width:16.5px;height:24px;background:rgb(195,203,221)"></div>
<div class="a" style="left:2032.5px;top:298.2px;width:16.5px;height:28px;background:rgb(220,228,246)"></div>
<div class="a" style="left:2032.5px;top:249.2px;width:16.5px;height:20px;background:rgb(221,229,247)"></div>
<div class="a" style="left:1860.5px;top:404.3px;width:30.0px;height:25px;background:rgb(237,237,240)"></div>
<div class="a" style="left:1860.5px;top:428.3px;width:30.0px;height:28px;background:rgb(238,238,241)"></div>
<div class="a" style="left:1890.5px;top:401.3px;width:40.0px;height:28px;background:rgb(241,241,244)"></div>
<div class="a" style="left:1890.5px;top:428.3px;width:40.0px;height:29px;background:rgb(236,236,239)"></div>
<div class="a" style="left:1930.5px;top:400.3px;width:30.0px;height:28px;background:rgb(206,206,209)"></div>
<div class="a" style="left:1930.5px;top:428.3px;width:30.0px;height:16px;background:rgb(243,243,246)"></div>
<div class="a" style="left:1960.5px;top:400.3px;width:30.0px;height:24px;background:rgb(212,212,215)"></div>
<div class="a" style="left:1960.5px;top:428.3px;width:30.0px;height:15px;background:rgb(241,241,244)"></div>
<div class="a" style="left:1990.5px;top:402.3px;width:24.0px;height:24px;background:rgb(225,225,228)"></div>
<div class="a" style="left:1990.5px;top:428.3px;width:24.0px;height:16px;background:rgb(250,250,253)"></div>
<div class="a" style="left:2014.5px;top:406.3px;width:34.5px;height:27px;background:rgb(205,205,208)"></div>
<div class="a" style="left:2014.5px;top:428.3px;width:34.5px;height:26px;background:rgb(245,245,248)"></div>
<div class="a" style="left:2014.5px;top:382.3px;width:34.5px;height:17px;background:rgb(243,243,246)"></div>
<div class="a" style="left:1860.5px;top:530.4px;width:19.0px;height:26px;background:rgb(244,244,247)"></div>
<div class="a" style="left:1879.5px;top:533.4px;width:35.0px;height:27px;background:rgb(241,241,244)"></div>
<div class="a" style="left:1879.5px;top:558.4px;width:35.0px;height:16px;background:rgb(244,244,247)"></div>
<div class="a" style="left:1914.5px;top:532.4px;width:40.0px;height:28px;background:rgb(205,205,208)"></div>
<div class="a" style="left:1914.5px;top:558.4px;width:40.0px;height:21px;background:rgb(236,236,239)"></div>
<div class="a" style="left:1954.5px;top:536.4px;width:19.0px;height:28px;background:rgb(235,235,238)"></div>
<div class="a" style="left:1954.5px;top:558.4px;width:19.0px;height:22px;background:rgb(243,243,246)"></div>
<div class="a" style="left:1973.5px;top:531.4px;width:30.0px;height:29px;background:rgb(223,223,226)"></div>
<div class="a" style="left:1973.5px;top:558.4px;width:30.0px;height:19px;background:rgb(244,244,247)"></div>
<div class="a" style="left:2003.5px;top:533.4px;width:30.0px;height:25px;background:rgb(232,232,235)"></div>
<div class="a" style="left:2003.5px;top:558.4px;width:30.0px;height:22px;background:rgb(246,246,249)"></div>
<div class="a" style="left:2003.5px;top:508.4px;width:30.0px;height:19px;background:rgb(249,249,252)"></div>
<div class="a" style="left:2033.5px;top:534.4px;width:15.5px;height:26px;background:rgb(218,218,221)"></div>
<div class="a" style="left:2033.5px;top:558.4px;width:15.5px;height:29px;background:rgb(238,238,241)"></div>
<div class="a" style="left:2033.5px;top:512.4px;width:15.5px;height:20px;background:rgb(243,243,246)"></div>
<div class="a" style="left:1860.5px;top:663.5px;width:24.0px;height:27px;background:rgb(211,211,214)"></div>
<div class="a" style="left:1860.5px;top:688.5px;width:24.0px;height:27px;background:rgb(239,239,242)"></div>
<div class="a" style="left:1860.5px;top:629.5px;width:24.0px;height:26px;background:rgb(251,251,254)"></div>
<div class="a" style="left:1884.5px;top:663.5px;width:30.0px;height:26px;background:rgb(243,243,246)"></div>
<div class="a" style="left:1884.5px;top:688.5px;width:30.0px;height:22px;background:rgb(236,236,239)"></div>
<div class="a" style="left:1914.5px;top:664.5px;width:19.0px;height:26px;background:rgb(221,221,224)"></div>
<div class="a" style="left:1914.5px;top:688.5px;width:19.0px;height:14px;background:rgb(248,248,251)"></div>
<div class="a" style="left:1933.5px;top:661.5px;width:35.0px;height:24px;background:rgb(233,233,236)"></div>
<div class="a" style="left:1933.5px;top:643.5px;width:35.0px;height:26px;background:rgb(245,245,248)"></div>
<div class="a" style="left:1968.5px;top:660.5px;width:19.0px;height:29px;background:rgb(232,232,235)"></div>
<div class="a" style="left:1968.5px;top:688.5px;width:19.0px;height:25px;background:rgb(246,246,249)"></div>
<div class="a" style="left:1987.5px;top:666.5px;width:24.0px;height:27px;background:rgb(216,216,219)"></div>
<div class="a" style="left:1987.5px;top:688.5px;width:24.0px;height:14px;background:rgb(247,247,250)"></div>
<div class="a" style="left:2011.5px;top:661.5px;width:37.5px;height:25px;background:rgb(206,206,209)"></div>
<div class="a" style="left:2011.5px;top:688.5px;width:37.5px;height:30px;background:rgb(241,241,244)"></div>
<div class="a" style="left:1860.5px;top:796.6px;width:24.0px;height:30px;background:rgb(229,229,232)"></div>
<div class="a" style="left:1860.5px;top:818.6px;width:24.0px;height:16px;background:rgb(239,239,242)"></div>
<div class="a" style="left:1860.5px;top:770.6px;width:24.0px;height:23px;background:rgb(249,249,252)"></div>
<div class="a" style="left:1884.5px;top:795.6px;width:35.0px;height:24px;background:rgb(216,216,219)"></div>
<div class="a" style="left:1884.5px;top:818.6px;width:35.0px;height:30px;background:rgb(245,245,248)"></div>
<div class="a" style="left:1919.5px;top:792.6px;width:30.0px;height:29px;background:rgb(233,233,236)"></div>
<div class="a" style="left:1919.5px;top:768.6px;width:30.0px;height:19px;background:rgb(244,244,247)"></div>
<div class="a" style="left:1949.5px;top:792.6px;width:35.0px;height:28px;background:rgb(209,209,212)"></div>
<div class="a" style="left:1984.5px;top:792.6px;width:30.0px;height:28px;background:rgb(205,205,208)"></div>
<div class="a" style="left:1984.5px;top:818.6px;width:30.0px;height:24px;background:rgb(243,243,246)"></div>
<div class="a" style="left:2014.5px;top:790.6px;width:30.0px;height:25px;background:rgb(235,235,238)"></div>
<div class="a" style="left:2014.5px;top:769.6px;width:30.0px;height:24px;background:rgb(243,243,246)"></div>
<div class="a" style="left:2044.5px;top:793.6px;width:4.5px;height:25px;background:rgb(212,212,215)"></div>
<div class="a" style="left:1860.5px;top:923.7px;width:40.0px;height:28px;background:rgb(232,232,235)"></div>
<div class="a" style="left:1860.5px;top:890.7px;width:40.0px;height:24px;background:rgb(246,246,249)"></div>
<div class="a" style="left:1900.5px;top:926.7px;width:40.0px;height:29px;background:rgb(222,222,225)"></div>
<div class="a" style="left:1900.5px;top:948.7px;width:40.0px;height:30px;background:rgb(238,238,241)"></div>
<div class="a" style="left:1940.5px;top:922.7px;width:40.0px;height:29px;background:rgb(220,220,223)"></div>
<div class="a" style="left:1940.5px;top:948.7px;width:40.0px;height:20px;background:rgb(249,249,252)"></div>
<div class="a" style="left:1940.5px;top:888.7px;width:40.0px;height:20px;background:rgb(245,245,248)"></div>
<div class="a" style="left:1980.5px;top:921.7px;width:40.0px;height:27px;background:rgb(235,235,238)"></div>
<div class="a" style="left:1980.5px;top:948.7px;width:40.0px;height:14px;background:rgb(244,244,247)"></div>
<div class="a" style="left:2020.5px;top:920.7px;width:19.0px;height:28px;background:rgb(238,238,241)"></div>
<div class="a" style="left:2039.5px;top:923.7px;width:9.5px;height:24px;background:rgb(211,211,214)"></div>
<div class="a" style="left:2039.5px;top:948.7px;width:9.5px;height:28px;background:rgb(237,237,240)"></div>
<div class="a" style="left:2039.5px;top:896.7px;width:9.5px;height:19px;background:rgb(249,249,252)"></div>
<div class="a" style="left:1860.5px;top:1051.8px;width:35.0px;height:26px;background:rgb(235,235,238)"></div>
<div class="a" style="left:1860.5px;top:1078.8px;width:35.0px;height:29px;background:rgb(249,249,252)"></div>
<div class="a" style="left:1895.5px;top:1053.8px;width:19.0px;height:28px;background:rgb(216,216,219)"></div>
<div class="a" style="left:1895.5px;top:1078.8px;width:19.0px;height:18px;background:rgb(240,240,243)"></div>
<div class="a" style="left:1914.5px;top:1051.8px;width:19.0px;height:25px;background:rgb(206,206,209)"></div>
<div class="a" style="left:1914.5px;top:1078.8px;width:19.0px;height:23px;background:rgb(246,246,249)"></div>
<div class="a" style="left:1914.5px;top:1027.8px;width:19.0px;height:25px;background:rgb(248,248,251)"></div>
<div class="a" style="left:1933.5px;top:1053.8px;width:35.0px;height:29px;background:rgb(210,210,213)"></div>
<div class="a" style="left:1933.5px;top:1078.8px;width:35.0px;height:30px;background:rgb(249,249,252)"></div>
<div class="a" style="left:1968.5px;top:1053.8px;width:24.0px;height:24px;background:rgb(237,237,240)"></div>
<div class="a" style="left:1968.5px;top:1078.8px;width:24.0px;height:30px;background:rgb(242,242,245)"></div>
<div class="a" style="left:1992.5px;top:1056.8px;width:40.0px;height:29px;background:rgb(217,217,220)"></div>
<div class="a" style="left:1992.5px;top:1078.8px;width:40.0px;height:30px;background:rgb(239,239,242)"></div>
<div class="a" style="left:1992.5px;top:1030.8px;width:40.0px;height:19px;background:rgb(251,251,254)"></div>
<div class="a" style="left:2032.5px;top:1052.8px;width:16.5px;height:28px;background:rgb(215,215,218)"></div>
<div class="a" style="left:2032.5px;top:1078.8px;width:16.5px;height:20px;background:rgb(250,250,253)"></div>
<div class="a" style="left:2032.5px;top:1031.8px;width:16.5px;height:18px;background:rgb(246,246,249)"></div>
<div class="a" style="left:1860.5px;top:1185.9px;width:24.0px;height:24px;background:rgb(212,212,215)"></div>
<div class="a" style="left:1860.5px;top:1208.9px;width:24.0px;height:27px;background:rgb(237,237,240)"></div>
<div class="a" style="left:1884.5px;top:1186.9px;width:35.0px;height:29px;background:rgb(238,238,241)"></div>
<div class="a" style="left:1884.5px;top:1208.9px;width:35.0px;height:14px;background:rgb(242,242,245)"></div>
<div class="a" style="left:1884.5px;top:1153.9px;width:35.0px;height:21px;background:rgb(252,252,255)"></div>
<div class="a" style="left:1919.5px;top:1185.9px;width:19.0px;height:30px;background:rgb(236,236,239)"></div>
<div class="a" style="left:1919.5px;top:1208.9px;width:19.0px;height:20px;background:rgb(246,246,249)"></div>
<div class="a" style="left:1938.5px;top:1180.9px;width:35.0px;height:24px;background:rgb(210,210,213)"></div>
<div class="a" style="left:1973.5px;top:1181.9px;width:40.0px;height:25px;background:rgb(234,234,237)"></div>
<div class="a" style="left:1973.5px;top:1208.9px;width:40.0px;height:19px;background:rgb(239,239,242)"></div>
<div class="a" style="left:2013.5px;top:1184.9px;width:30.0px;height:24px;background:rgb(210,210,213)"></div>
<div class="a" style="left:2013.5px;top:1208.9px;width:30.0px;height:28px;background:rgb(246,246,249)"></div>
<div class="a" style="left:2013.5px;top:1154.9px;width:30.0px;height:22px;background:rgb(244,244,247)"></div>
<div class="a" style="left:2043.5px;top:1184.9px;width:5.5px;height:26px;background:rgb(231,231,234)"></div>
<div class="a" style="left:2043.5px;top:1208.9px;width:5.5px;height:25px;background:rgb(245,245,248)"></div>
<div class="a" style="left:2043.5px;top:1158.9px;width:5.5px;height:18px;background:rgb(243,243,246)"></div>
</div>
<div class="a" style="left:2585px;top:978px;width:71px;height:1213px;background:linear-gradient(to right, rgba(255,255,255,0), #fff 95%)"></div>
<div class="a" style="left:2693px;top:1262px;width:8px;height:8px;border-radius:4px;background:#b6bbce"></div>
<div class="a" style="left:2693px;top:1274px;width:8px;height:8px;border-radius:4px;background:#b6bbce"></div>
<div class="a" style="left:2693px;top:1286px;width:8px;height:8px;border-radius:4px;background:#b6bbce"></div>
<div class="a" style="left:2693px;top:1298px;width:8px;height:8px;border-radius:4px;background:#b6bbce"></div>
<div class="a" style="left:2705px;top:342px;width:1399px;height:1862px;background:#ffffff;"></div>
<div class="a" style="left:2704px;top:342px;width:2px;height:1862px;background:#e3e4ea;"></div>
<svg class="a" style="left:2750px;top:418px;" width="40" height="40" viewBox="2750 418 40 40"><path d="M2783,438 H2759.5 M2770.5,426.5 L2759,438 L2770.5,449.5" fill="none" stroke="#45475f" stroke-width="3"/></svg>
<div class="a" style="left:2826.50px;top:416.53px;font-size:32.5px;line-height:42px;color:#32354b;font-weight:700;letter-spacing:-0.587px;">Запись номер 112</div>
<div class="a" style="left:3145.00px;top:412.91px;font-size:32px;line-height:42px;color:#32354b;letter-spacing:0px;">-</div>
<svg class="a" style="left:4032px;top:404px;" width="40" height="40" viewBox="4032 404 40 40"><path d="M4040,411 L4063.5,434.5 M4063.5,411 L4040,434.5" stroke="#45475f" stroke-width="3"/></svg>
<div class="a" style="left:2706px;top:525px;width:1398px;height:2px;background:#e3e4ea;"></div>
<div class="a" style="left:2755px;top:560px;width:1304px;height:79px;box-sizing:border-box;border:2px solid #9fa2b9;border-radius:4px;background:#fff"></div>
<svg class="a" style="left:2770px;top:578px;" width="46" height="46" viewBox="2770 578 46 46"><circle cx="2792.5" cy="598.3" r="12" fill="none" stroke="#5b5f84" stroke-width="3.7"/><path d="M2800.5,606.5 L2809.5,615.5" stroke="#5b5f84" stroke-width="5"/></svg>
<div class="a" style="left:2839.00px;top:579.06px;font-size:33px;line-height:43px;color:#8a8eab;letter-spacing:2.075px;">Поиск</div>
<div class="a" style="left:2706px;top:674px;width:1398px;height:2px;background:#e3e4ea;"></div>
<div class="a" style="left:2755.00px;top:710.61px;font-size:32px;line-height:42px;color:#32354b;font-weight:700;letter-spacing:0.636px;">Поля командной строки</div>
<svg class="a" style="left:4034px;top:720px;" width="33" height="21" viewBox="4034 720 33 21"><polyline points="4038,737 4050.5,724 4063,737" fill="none" stroke="#45475f" stroke-width="3"/></svg>
<div class="a" style="left:2755.00px;top:845.45px;font-size:29px;line-height:38px;color:#32354b;letter-spacing:1.0px;">Командная строка</div>
<div class="a" style="left:2755.00px;top:885.95px;font-size:29px;line-height:38px;color:#565a7a;letter-spacing:1.0px;">cmdline</div>
<div class="a" style="right:51.45px;top:867.95px;font-size:29px;line-height:38px;color:#32354b;letter-spacing:0.55px;">"C:\Program Files\Microsoft\Exchange Server\V15\Bin\Microsoft.E</div>
<div class="a" style="right:389.30px;top:907.95px;font-size:29px;line-height:38px;color:#32354b;letter-spacing:0.7px;">xchange.Store.Worker.exe"</div>
<div class="a" style="left:2706px;top:1070.5px;width:1398px;height:2px;background:#e3e4ea;"></div>
<div class="a" style="left:2755.00px;top:1107.71px;font-size:32px;line-height:42px;color:#32354b;font-weight:700;letter-spacing:0.636px;">Поля, описывающие источник события</div>
<svg class="a" style="left:4034px;top:1117px;" width="33" height="21" viewBox="4034 1117 33 21"><polyline points="4038,1134 4050.5,1121 4063,1134" fill="none" stroke="#45475f" stroke-width="3"/></svg>
<div class="a" style="left:2755.00px;top:1242.95px;font-size:29px;line-height:38px;color:#32354b;letter-spacing:1.162px;">Timestamp загрузки ...</div>
<div class="a" style="left:2755.00px;top:1282.95px;font-size:29px;line-height:38px;color:#565a7a;letter-spacing:0.941px;">dev_boot_timestamp</div>
<div class="a" style="left:3170.00px;top:1263.55px;font-size:29px;line-height:38px;color:#32354b;letter-spacing:1.717px;">1763043046488</div>
<div class="a" style="left:2755.00px;top:1354.55px;font-size:29px;line-height:38px;color:#32354b;letter-spacing:0.289px;">FQDN хоста</div>
<div class="a" style="left:2755.00px;top:1394.55px;font-size:29px;line-height:38px;color:#565a7a;letter-spacing:0.857px;">dev_fqdn</div>
<div class="a" style="left:3170.00px;top:1374.95px;font-size:29px;line-height:38px;color:#32354b;letter-spacing:1.0px;">DC</div>
<div class="a" style="left:2755.00px;top:1466.95px;font-size:29px;line-height:38px;color:#32354b;letter-spacing:0.84px;">Имя домена хоста</div>
<div class="a" style="left:2755.00px;top:1506.95px;font-size:29px;line-height:38px;color:#565a7a;letter-spacing:0.556px;">dev_domain</div>
<div class="a" style="left:2755.00px;top:1577.95px;font-size:29px;line-height:38px;color:#32354b;letter-spacing:0.895px;">Уникальный иденти...</div>
<div class="a" style="left:2755.00px;top:1617.95px;font-size:29px;line-height:38px;color:#565a7a;letter-spacing:0.55px;">dev_os_guid</div>
<div class="a" style="left:3170.00px;top:1598.95px;font-size:29px;line-height:38px;color:#32354b;letter-spacing:1.257px;">7e8ba358-8851-4eb8-a20b-13881f8155eb</div>
<div class="a" style="left:2755.00px;top:1690.45px;font-size:29px;line-height:38px;color:#32354b;letter-spacing:1.0px;">Операционная сист...</div>
<div class="a" style="left:2755.00px;top:1730.45px;font-size:29px;line-height:38px;color:#565a7a;letter-spacing:0.12px;">dev_os</div>
<div class="a" style="left:3170.00px;top:1710.95px;font-size:29px;line-height:38px;color:#32354b;letter-spacing:0.561px;">Windows Server 2016 StandardServer x86_64 #10.0.14393 (Dom</div>
<div class="a" style="left:3170.00px;top:1751.95px;font-size:29px;line-height:38px;color:#32354b;letter-spacing:0.714px;">ain Controller)</div>
<div class="a" style="left:2755.00px;top:1836.95px;font-size:29px;line-height:38px;color:#32354b;letter-spacing:1.133px;">IPv4-адрес хоста</div>
<div class="a" style="left:2755.00px;top:1876.95px;font-size:29px;line-height:38px;color:#565a7a;letter-spacing:0.9px;">dev_ipv4</div>
<div class="a" style="left:3170.00px;top:1858.95px;font-size:29px;line-height:38px;color:#32354b;letter-spacing:1.0px;">10</div>
<div class="a" style="left:2755.00px;top:1948.95px;font-size:29px;line-height:38px;color:#32354b;letter-spacing:1.0px;">Тип операционной с...</div>
<div class="a" style="left:2755.00px;top:1988.95px;font-size:29px;line-height:38px;color:#565a7a;letter-spacing:0.9px;">dev_os_type</div>
<div class="a" style="left:3170.00px;top:1970.95px;font-size:29px;line-height:38px;color:#32354b;letter-spacing:0.767px;">windows</div>
<div class="a" style="left:2755.00px;top:2060.95px;font-size:29px;line-height:38px;color:#32354b;letter-spacing:0.889px;">Идентификатор хоста</div>
<div class="a" style="left:2755.00px;top:2100.95px;font-size:29px;line-height:38px;color:#565a7a;letter-spacing:0.6px;">dev_id</div>
<div class="a" style="left:3170.00px;top:2081.95px;font-size:29px;line-height:38px;color:#32354b;letter-spacing:1.571px;">0cf92a75-7fe2-429c-98c7-ecf97ced67bd</div>
<div class="a" style="left:2755.00px;top:2173.45px;font-size:29px;line-height:38px;color:#32354b;letter-spacing:0.8px;">Активные роли опер...</div>
<div class="a" style="left:2755.00px;top:2213.45px;font-size:29px;line-height:38px;color:#565a7a;letter-spacing:0.9px;">dev_roles</div>
<div class="a" style="left:3170.00px;top:2193.95px;font-size:29px;line-height:38px;color:#32354b;letter-spacing:1.0px;">ADAS,DNS, Domain Services, Web Server (IIS) [IIS-WebServerRole]</div>
<div class="a" style="left:3212px;top:1362.7px;width:77.0px;height:47.7px;background:#f7f7f8"></div>
<div class="a" style="left:3212px;top:1392px;width:47.0px;height:52.0px;background:#cfcfd4"></div>
<div class="a" style="left:3212px;top:1392px;width:19.0px;height:18.0px;background:#e0e0e4"></div>
<div class="a" style="left:3284.6px;top:1410px;width:24.4px;height:34.0px;background:#f8f8f9"></div>
<div class="a" style="left:3309px;top:1402px;width:33.0px;height:42.0px;background:#cfcfd4"></div>
<div class="a" style="left:3342px;top:1402px;width:40.0px;height:42.0px;background:#f5f5f6"></div>
<div class="a" style="left:3372px;top:1383px;width:33.0px;height:42.0px;background:#f2f2f3"></div>
<div class="a" style="left:3163.8px;top:1475.8px;width:26.2px;height:22.9px;background:#e3e3e6"></div>
<div class="a" style="left:3216.8px;top:1475.8px;width:21.0px;height:53.9px;background:#d5d5da"></div>
<div class="a" style="left:3237.8px;top:1493px;width:32.0px;height:36.7px;background:#d8d8dc"></div>
<div class="a" style="left:3200.9px;top:1879.8px;width:46.9px;height:22.5px;background:#ededef"></div>
<div class="a" style="left:3225px;top:1857.4px;width:22.8px;height:22.4px;background:#e8e8ea"></div>
<div class="a" style="left:3247.8px;top:1861px;width:18.0px;height:41.3px;background:#d0d0d5"></div>
<div class="a" style="left:3265.8px;top:1873.3px;width:25.2px;height:29.0px;background:#e4e4e7"></div>
<div class="a" style="left:3291px;top:1839px;width:21.7px;height:63.3px;background:#d9d9dd"></div>
<div class="a" style="left:3310.6px;top:1839px;width:20.4px;height:63.3px;background:#efeff1"></div>
<div class="a" style="left:3405.50px;top:1374.95px;font-size:29px;line-height:38px;color:#32354b;letter-spacing:1.25px;">local</div>
<div class="a" style="left:3268.00px;top:1486.95px;font-size:29px;line-height:38px;color:#32354b;letter-spacing:1.0px;">.local</div>
<div class="a" style="left:3153.5px;top:213px;width:525px;height:793px;background:#fcfcfd;border-radius:4px;box-shadow:0 3px 16px rgba(60,60,120,0.16), 0 0 2px rgba(60,60,120,0.14);overflow:hidden">
<div class="a" style="left:0;top:95px;width:525px;height:604px;overflow:hidden">
<div class="a" style="left:32.50px;top:-17.05px;font-size:29px;line-height:38px;color:#32354b;letter-spacing:0.588px;">Последние 5 минут</div>
<div class="a" style="left:32.50px;top:62.95px;font-size:29px;line-height:38px;color:#32354b;letter-spacing:0.588px;">Последние 15 минут</div>
<div class="a" style="left:32.50px;top:142.95px;font-size:29px;line-height:38px;color:#32354b;letter-spacing:0.588px;">Последние 30 минут</div>
<div class="a" style="left:32.50px;top:222.95px;font-size:29px;line-height:38px;color:#32354b;letter-spacing:0.588px;">Последний час</div>
<div class="a" style="left:32.50px;top:302.95px;font-size:29px;line-height:38px;color:#32354b;letter-spacing:0.588px;">Последние 3 часа</div>
<div class="a" style="left:32.50px;top:382.95px;font-size:29px;line-height:38px;color:#32354b;letter-spacing:0.588px;">Последние 6 часов</div>
<div class="a" style="left:32.50px;top:462.95px;font-size:29px;line-height:38px;color:#32354b;letter-spacing:0.588px;">Последние 12 часов</div>
<div class="a" style="left:0;top:522px;width:525px;height:82px;background:#dfe8f6"></div>
<div class="a" style="left:32.50px;top:542.95px;font-size:29px;line-height:38px;color:#32354b;letter-spacing:0.588px;">Последние 24 часа</div>
</div>
<div class="a" style="left:0;top:93px;width:525px;height:2px;background:#e3e4ea"></div>
<div class="a" style="left:240.5px;top:92px;width:285px;height:3px;background:#2654d8"></div>
<div class="a" style="left:32.80px;top:27.75px;font-size:29px;line-height:38px;color:#32354b;letter-spacing:0.711px;">Абсолютный</div>
<div class="a" style="left:273.90px;top:27.75px;font-size:29px;line-height:38px;color:#2654d8;letter-spacing:0.7px;">Относительный</div>
<div class="a" style="left:153.00px;top:730.96px;font-size:25.5px;line-height:33px;color:#c8202c;letter-spacing:1.5px;">Сбросить</div>
<div class="a" style="left:341.00px;top:730.96px;font-size:25.5px;line-height:33px;color:#2654d8;letter-spacing:1.688px;">Применить</div>
</div>
</body></html>
